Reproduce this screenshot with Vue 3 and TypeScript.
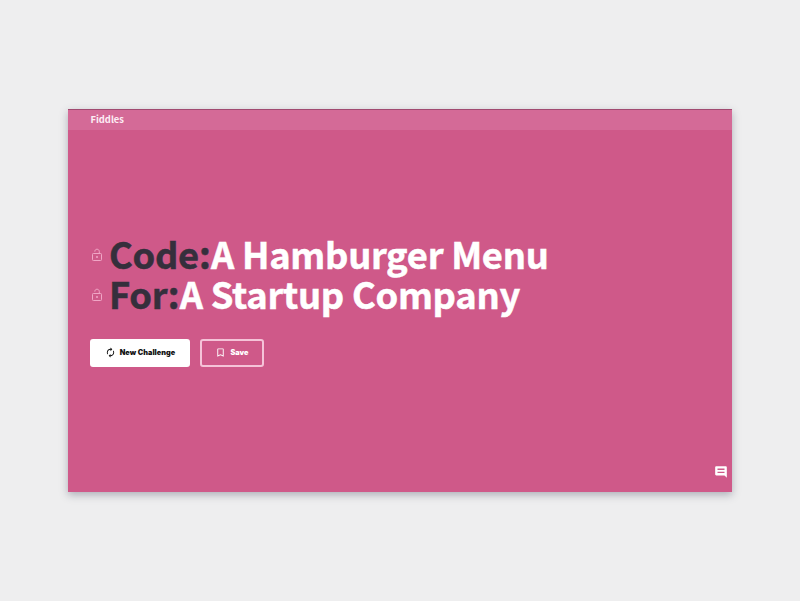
<script setup lang="ts">
interface ChallengeLine {
  label: string
  value: string
}

const lines: ChallengeLine[] = [
  { label: 'Code:', value: 'A Hamburger Menu' },
  { label: 'For:', value: 'A Startup Company' },
]
</script>

<template>
  <div class="stage">
    <div class="window">
      <header class="bar">Fiddles</header>
      <main class="content">
        <h1 class="title">
          <span v-for="line in lines" :key="line.label" class="line">
            <svg class="lock" viewBox="0 0 12 14" aria-hidden="true">
              <rect x="1.5" y="5.5" width="9" height="7" rx="0.8" />
              <path d="M3.8 3.6C3.8 2.200 4.700 1.200 6 1.200s2.300 1 2.300 2.300v2" />
              <circle cx="6" cy="9" r="0.7" />
            </svg>
            <span class="label">{{ line.label }}</span>
            <span class="value">{{ line.value }}</span>
          </span>
        </h1>
        <div class="actions">
          <button class="btn primary" type="button">
            <svg class="icon" viewBox="0 0 24 24" aria-hidden="true">
              <path d="M12 6v3l4-4-4-4v3c-4.42 0-8 3.58-8 8 0 1.57.46 3.03 1.24 4.26L6.7 14.8A5.87 5.87 0 0 1 6 12c0-3.31 2.69-6 6-6zm6.76 1.74L17.3 9.2c.44.84.7 1.79.7 2.8 0 3.31-2.69 6-6 6v-3l-4 4 4 4v-3c4.42 0 8-3.58 8-8 0-1.57-.46-3.03-1.24-4.26z" />
            </svg>
            New Challenge
          </button>
          <button class="btn outline" type="button">
            <svg class="icon" viewBox="0 0 24 24" aria-hidden="true">
              <path d="M17 3H7c-1.1 0-2 .9-2 2v16l7-3 7 3V5c0-1.1-.9-2-2-2zm0 15-5-2.18L7 18V5h10v13z" />
            </svg>
            Save
          </button>
        </div>
      </main>
      <svg class="chat" viewBox="0 0 24 24" aria-hidden="true">
        <path d="M21.99 4c0-1.1-.89-2-1.99-2H4c-1.1 0-2 .9-2 2v12c0 1.1.9 2 2 2h14l4 4-.01-18zM18 13.5H6v-2h12v2zm0-5H6V6h12v2.5z" />
      </svg>
    </div>
  </div>
</template>

<style>
body {
  margin: 0;
  background: #eeeeef;
}
</style>

<style scoped>
.stage {
  box-sizing: border-box;
  height: 601px;
  padding: 109px 68px 0;
  background: #eeeeef;
  font-family: "Noto Sans CJK SC", sans-serif;
}
.window {
  box-sizing: border-box;
  display: flex;
  flex-direction: column;
  height: 383px;
  background: #cf5989;
  border-top: 1px solid #a14a70;
  box-shadow: 0 3px 8px rgba(60, 65, 85, 0.36);
}
.bar {
  height: 20px;
  padding-left: 22.5px;
  background: #d46a97;
  color: #fdeef5;
  font-size: 9.4px;
  font-weight: 700;
  line-height: 19px;
}
.content {
  flex: 1;
  padding: 103px 22px 0;
}
.title {
  margin: 0;
  font-size: 36.3px;
  font-weight: 700;
  line-height: 40px;
  letter-spacing: -0.27px;
  -webkit-text-stroke: 0.5px currentColor;
}
.line {
  display: flex;
  align-items: center;
  height: 40px;
  white-space: nowrap;
}
.lock {
  width: 12px;
  height: 14px;
  margin: 3px 6px 0 1px;
  fill: none;
  stroke: #f0a6c6;
  stroke-width: 1;
}
.label {
  color: #352f3c;
}
.value {
  margin-left: 0.5px;
  color: #fff;
}
.actions {
  display: flex;
  gap: 10px;
  margin-top: 26px;
}
.btn {
  box-sizing: border-box;
  display: flex;
  align-items: center;
  justify-content: center;
  gap: 4px;
  height: 28px;
  padding: 0 0 1px;
  border: 2px solid #fff;
  border-radius: 3px;
  font-family: Inter, sans-serif;
  font-size: 7.3px;
  font-weight: 900;
  letter-spacing: 0.05px;
}
.primary {
  width: 100px;
  background: #fff;
  color: #111;
}
.outline {
  width: 64px;
  border-color: #f5c3d8;
  background: transparent;
  color: #fff;
}
.icon {
  width: 11px;
  height: 11px;
  fill: currentColor;
}
.chat {
  align-self: flex-end;
  width: 14px;
  height: 14px;
  margin: 0 4px 13px 0;
  fill: #fff;
}
</style>
